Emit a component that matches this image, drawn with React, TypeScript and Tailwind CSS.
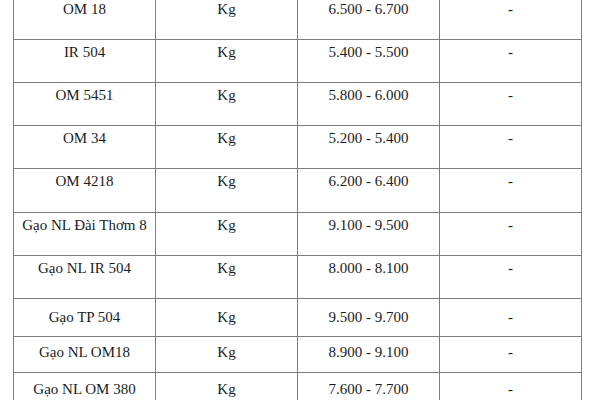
import React from "react";

type Row = { name: string; price: string; h: string; pt: string };

const rows: Row[] = [
  { name: "OM 18", price: "6.500 - 6.700", h: "h-[43px]", pt: "pt-[4px]" },
  { name: "IR 504", price: "5.400 - 5.500", h: "h-[43px]", pt: "pt-[4px]" },
  { name: "OM 5451", price: "5.800 - 6.000", h: "h-[43px]", pt: "pt-[4px]" },
  { name: "OM 34", price: "5.200 - 5.400", h: "h-[43px]", pt: "pt-[4px]" },
  { name: "OM 4218", price: "6.200 - 6.400", h: "h-[44px]", pt: "pt-[4px]" },
  { name: "Gạo NL Đài Thơm 8", price: "9.100 - 9.500", h: "h-[43px]", pt: "pt-[4px]" },
  { name: "Gạo NL IR 504", price: "8.000 - 8.100", h: "h-[43px]", pt: "pt-[4px]" },
  { name: "Gạo TP 504", price: "9.500 - 9.700", h: "h-[38px]", pt: "pt-[10px]" },
  { name: "Gạo NL OM18", price: "8.900 - 9.100", h: "h-[36px]", pt: "pt-[7px]" },
  { name: "Gạo NL OM 380", price: "7.600 - 7.700", h: "h-[36px]", pt: "pt-[8px]" },
];

export default function App() {
  return (
    <div
      className="w-[600px] h-[400px] overflow-hidden bg-white text-[#1c1c1c]"
      style={{ fontFamily: '"Liberation Serif", "Times New Roman", serif' }}
    >
      <div className="ml-[13px] -mt-[4px] w-[569px] border-t border-l border-[#7d7d7d]">
        {rows.map((r, i) => (
          <div
            key={i}
            className={`grid grid-cols-[142px_142px_142px_142px] border-b border-[#7d7d7d] ${r.h}`}
          >
            {[r.name, "Kg", r.price, "-"].map((t, j) => (
              <div
                key={j}
                className={`border-r border-[#7d7d7d] text-center text-[15px] leading-[17px] whitespace-nowrap ${r.pt}`}
              >
                {t}
              </div>
            ))}
          </div>
        ))}
      </div>
    </div>
  );
}
